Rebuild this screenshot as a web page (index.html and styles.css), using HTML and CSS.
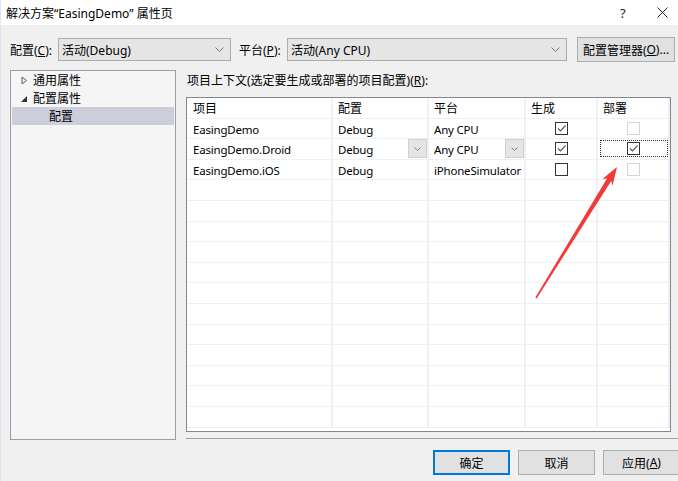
FILE: index.html
```html
<!DOCTYPE html>
<html lang="zh-CN">
<head>
<meta charset="utf-8">
<title>属性页</title>
<link rel="stylesheet" href="styles.css">
</head>
<body>
<div class="window">
  <div class="titlebar">
    <span class="title">解决方案“EasingDemo” 属性页</span>
    <span class="help">?</span>
    <span class="close"><svg width="11" height="11" viewBox="0 0 11 11"><path d="M0.5 0.5 L10.5 10.5 M10.5 0.5 L0.5 10.5" stroke="#222" stroke-width="1" fill="none"/></svg></span>
  </div>

  <div class="toolbar">
    <span class="lbl">配置(<u>C</u>):</span>
    <div class="combo combo-config">
      <span>活动(Debug)</span>
      <svg class="chev" width="9" height="5" viewBox="0 0 9 5"><path d="M0.5 0.5 L4.5 4.5 L8.5 0.5" stroke="#707070" fill="none"/></svg>
    </div>
    <span class="lbl lbl-platform">平台(<u>P</u>):</span>
    <div class="combo combo-platform">
      <span>活动(Any CPU)</span>
      <svg class="chev" width="9" height="5" viewBox="0 0 9 5"><path d="M0.5 0.5 L4.5 4.5 L8.5 0.5" stroke="#707070" fill="none"/></svg>
    </div>
    <div class="btn btn-cfgmgr">配置管理器(<u>O</u>)...</div>
  </div>

  <div class="main">
    <div class="tree">
      <div class="node">
        <svg class="tri" width="7" height="9" viewBox="0 0 7 9"><path d="M1 1 L5.5 4.5 L1 8 Z" stroke="#5a5a5a" fill="none"/></svg>
        <span>通用属性</span>
      </div>
      <div class="node">
        <svg class="tri" width="7" height="9" viewBox="0 0 7 9"><path d="M6 2 L6 8 L0 8 Z" fill="#333"/></svg>
        <span>配置属性</span>
      </div>
      <div class="node node-sel"><span>配置</span></div>
    </div>

    <div class="content">
      <div class="ctx-label">项目上下文(选定要生成或部署的项目配置)(<u>R</u>):</div>
      <div class="grid">
        <div class="row">
          <div class="cell c1">项目</div><div class="cell">配置</div><div class="cell">平台</div><div class="cell">生成</div><div class="cell">部署</div>
        </div>
        <div class="row">
          <div class="cell c1 lat">EasingDemo</div>
          <div class="cell lat">Debug</div>
          <div class="cell lat">Any CPU</div>
          <div class="cell ck"><span class="box checked"><svg width="11" height="11" viewBox="0 0 11 11"><path d="M2 5.5 L4.5 8 L9.5 2.5" stroke="#5a5a5a" stroke-width="1.2" fill="none"/></svg></span></div>
          <div class="cell ck"><span class="box disabled"></span></div>
        </div>
        <div class="row">
          <div class="cell c1 lat">EasingDemo.Droid</div>
          <div class="cell lat dd"><span>Debug</span><span class="ddbtn"><svg width="7" height="4" viewBox="0 0 7 4"><path d="M0.5 0.5 L3.5 3.5 L6.5 0.5" stroke="#808080" fill="none"/></svg></span></div>
          <div class="cell lat dd"><span>Any CPU</span><span class="ddbtn"><svg width="7" height="4" viewBox="0 0 7 4"><path d="M0.5 0.5 L3.5 3.5 L6.5 0.5" stroke="#808080" fill="none"/></svg></span></div>
          <div class="cell ck"><span class="box checked"><svg width="11" height="11" viewBox="0 0 11 11"><path d="M2 5.5 L4.5 8 L9.5 2.5" stroke="#5a5a5a" stroke-width="1.2" fill="none"/></svg></span></div>
          <div class="cell ck"><span class="focus"><span class="box checked"><svg width="11" height="11" viewBox="0 0 11 11"><path d="M2 5.5 L4.5 8 L9.5 2.5" stroke="#5a5a5a" stroke-width="1.2" fill="none"/></svg></span></span></div>
        </div>
        <div class="row">
          <div class="cell c1 lat">EasingDemo.iOS</div>
          <div class="cell lat">Debug</div>
          <div class="cell lat">iPhoneSimulator</div>
          <div class="cell ck"><span class="box"></span></div>
          <div class="cell ck"><span class="box disabled"></span></div>
        </div>
        <div class="row"><div class="cell c1"></div><div class="cell"></div><div class="cell"></div><div class="cell"></div><div class="cell"></div></div>
        <div class="row"><div class="cell c1"></div><div class="cell"></div><div class="cell"></div><div class="cell"></div><div class="cell"></div></div>
        <div class="row"><div class="cell c1"></div><div class="cell"></div><div class="cell"></div><div class="cell"></div><div class="cell"></div></div>
        <div class="row"><div class="cell c1"></div><div class="cell"></div><div class="cell"></div><div class="cell"></div><div class="cell"></div></div>
        <div class="row"><div class="cell c1"></div><div class="cell"></div><div class="cell"></div><div class="cell"></div><div class="cell"></div></div>
        <div class="row"><div class="cell c1"></div><div class="cell"></div><div class="cell"></div><div class="cell"></div><div class="cell"></div></div>
        <div class="row"><div class="cell c1"></div><div class="cell"></div><div class="cell"></div><div class="cell"></div><div class="cell"></div></div>
        <div class="row"><div class="cell c1"></div><div class="cell"></div><div class="cell"></div><div class="cell"></div><div class="cell"></div></div>
        <div class="row"><div class="cell c1"></div><div class="cell"></div><div class="cell"></div><div class="cell"></div><div class="cell"></div></div>
        <div class="row"><div class="cell c1"></div><div class="cell"></div><div class="cell"></div><div class="cell"></div><div class="cell"></div></div>
        <div class="row"><div class="cell c1"></div><div class="cell"></div><div class="cell"></div><div class="cell"></div><div class="cell"></div></div>
        <div class="row"><div class="cell c1"></div><div class="cell"></div><div class="cell"></div><div class="cell"></div><div class="cell"></div></div>
      </div>
      <div class="sep"></div>
      <div class="buttons">
        <div class="btn btn-ok">确定</div>
        <div class="btn">取消</div>
        <div class="btn">应用(<u>A</u>)</div>
      </div>
    </div>
  </div>

  <svg class="arrow" width="678" height="481" viewBox="0 0 678 481">
    <polygon points="617,167 612.6,185.5 611.2,181.1 536.7,298.4 535.3,297.6 607.0,178.5 602.4,179.1" fill="#f23a3a"/>
  </svg>
</div>
</body>
</html>
```

FILE: styles.css
```css
* { box-sizing: border-box; }
html, body { margin: 0; padding: 0; }
body {
  width: 678px;
  height: 481px;
  overflow: hidden;
  background: #f0f0f0;
  font-family: "Noto Sans", "Noto Sans CJK SC", sans-serif;
  font-size: 12px;
  color: #000;
}
.window {
  position: relative;
  width: 678px;
  height: 481px;
  border-left: 1px solid #dbe6f2;
}
u { text-decoration: underline; text-underline-offset: 1px; }

.titlebar {
  height: 25px;
  background: #fff;
  display: flex;
  align-items: center;
  padding-left: 5px;
}
.title { font-size: 12px; flex: 1; }
.help { width: 14px; font-size: 13px; margin-right: 23px; color: #222; }
.close { width: 11px; height: 11px; margin-right: 10px; display: flex; }

.toolbar {
  display: flex;
  align-items: center;
  margin-top: 12px;
  height: 25px;
  padding-left: 9px;
}
.lbl { white-space: nowrap; width: 40px; overflow: visible; }
.combo {
  height: 23px;
  background: #e5e5e5;
  border: 1px solid #acacac;
  display: flex;
  align-items: center;
  justify-content: space-between;
  padding: 0 6px 0 3px;
}
.combo-config { width: 173px; margin-left: 8px; }
.lbl-platform { margin-left: 8px; }
.combo-platform { width: 280px; margin-left: 8px; }
.btn {
  height: 25px;
  background: #e1e1e1;
  border: 1px solid #adadad;
  display: flex;
  align-items: center;
  justify-content: center;
  white-space: nowrap;
}
.btn-cfgmgr { width: 98px; margin-left: 10px; }

.main {
  display: flex;
  align-items: flex-start;
  margin-top: 8px;
  padding-left: 9px;
}
.tree {
  width: 167px;
  height: 370px;
  background: #f5f5f5;
  border: 1px solid #9d9ca8;
  padding: 0 1px;
}
.node {
  height: 18px;
  display: flex;
  align-items: center;
  padding-left: 9px;
}
.tri { margin-right: 5px; }
.node-sel {
  background: #cccedb;
  padding-left: 37px;
}

.content {
  margin-left: 10px;
  width: 492px;
  display: flex;
  flex-direction: column;
}
.ctx-label {
  height: 20px;
  display: flex;
  align-items: center;
  padding-left: 1px;
}
.grid {
  margin-top: 7px;
  width: 485px;
  height: 335px;
  background: #fff;
  border: 1px solid #828790;
  overflow: hidden;
}
.row {
  display: grid;
  grid-template-columns: 146px 96px 97px 72px 72px;
  height: 20.6px;
  border-bottom: 1px solid #f0f0f0;
}
.cell {
  border-right: 2px solid #eef1f5;
  padding-left: 5px;
  display: flex;
  align-items: center;
  white-space: nowrap;
  overflow: hidden;
}
.lat {
  font-size: 11.5px;
  letter-spacing: -0.2px;
  padding-top: 2px;
}
.c1 { padding-left: 6px; }
.dd { justify-content: space-between; padding-right: 0; padding-top: 0; }
.dd > span:first-child { padding-top: 2px; }
.ddbtn {
  width: 19px;
  height: 19px;
  background: #e5e5e5;
  border: 1px solid #d0d0d0;
  display: flex;
  align-items: center;
  justify-content: center;
}
.ck { justify-content: center; padding-left: 0; }
.box {
  width: 13px;
  height: 13px;
  border: 1px solid #333;
  background: #fff;
  display: flex;
  align-items: center;
  justify-content: center;
}
.box.disabled { border-color: #d4d4d4; }
.focus {
  width: 68px;
  height: 17px;
  border: 1px dotted #333;
  display: flex;
  align-items: center;
  justify-content: center;
  margin-left: 1px;
}

.sep {
  margin-top: 6px;
  height: 1px;
  background: #a0a0a0;
  width: 492px;
}
.buttons {
  display: flex;
  gap: 8px;
  margin-top: 11px;
  padding-left: 247px;
}
.buttons .btn { width: 77px; flex: none; }
.btn-ok { border: 2px solid #0078d7; }

.arrow {
  position: absolute;
  left: -1px;
  top: 0;
  pointer-events: none;
}
```
